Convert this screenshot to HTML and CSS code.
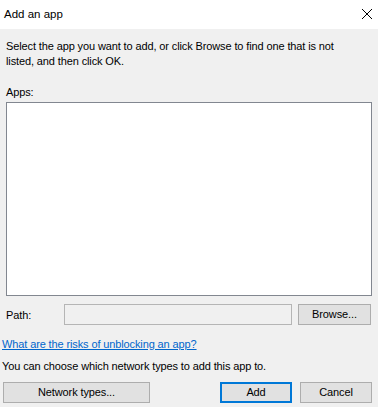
FILE: index.html
```html
<!DOCTYPE html>
<html>
<head>
<meta charset="utf-8">
<link rel="stylesheet" href="styles.css">
</head>
<body>
<div class="dialog">
  <div class="titlebar">
    <span class="title">Add an app</span>
    <svg class="close" width="12" height="12" viewBox="0 0 12 12"><path d="M1 1 L11 11 M11 1 L1 11" stroke="#000" stroke-width="1" fill="none"/></svg>
  </div>
  <div class="content">
    <p class="intro">Select the app you want to add, or click Browse to find one that is not listed, and then click OK.</p>
    <div class="label apps-label">Apps:</div>
    <div class="listbox"></div>
    <div class="path-row">
      <span class="label path-label">Path:</span>
      <div class="pathbox"></div>
      <button class="btn browse">Browse...</button>
    </div>
    <a class="link" href="#">What are the risks of unblocking an app?</a>
    <p class="note">You can choose which network types to add this app to.</p>
    <div class="button-row">
      <button class="btn network">Network types...</button>
      <div class="spacer"></div>
      <button class="btn add default">Add</button>
      <button class="btn cancel">Cancel</button>
    </div>
  </div>
</div>
</body>
</html>
```
FILE: styles.css
```css
html, body {
  margin: 0;
  padding: 0;
  background: #f0f0f0;
}
body {
  width: 378px;
  height: 407px;
  overflow: hidden;
  font-family: "Liberation Sans", Arial, sans-serif;
  font-size: 11px;
  letter-spacing: -0.12px;
  color: #000;
}
.dialog {
  display: flex;
  flex-direction: column;
  height: 407px;
}
.titlebar {
  height: 29px;
  background: #fff;
  display: flex;
  align-items: center;
  justify-content: space-between;
  padding: 0 5px 0 4px;
}
.title {
  font-size: 11.5px;
  letter-spacing: 0;
  margin-top: -1px;
}
.close {
  display: block;
  margin-top: -2px;
}
.content {
  flex: 1;
  display: flex;
  flex-direction: column;
  padding: 0 6px 0 2px;
}
.intro {
  margin: 10px 0 0 4px;
  max-width: 338px;
  line-height: 15px;
}
.apps-label {
  margin: 16px 0 0 4px;
  line-height: 15px;
}
.listbox {
  margin: 2px 0 0 4px;
  height: 192px;
  background: #fff;
  border: 1px solid #828790;
}
.path-row {
  display: flex;
  align-items: center;
  margin: 8px 0 0 4px;
  height: 21px;
}
.path-label {
  width: 58px;
}
.pathbox {
  width: 226px;
  height: 19px;
  border: 1px solid #b5b5b5;
  background: #f0f0f0;
}
.btn {
  font-family: inherit;
  font-size: 11px;
  letter-spacing: -0.12px;
  color: #000;
  background: #e1e1e1;
  border: 1px solid #adadad;
  padding: 0;
  height: 21px;
  line-height: 19px;
}
.browse {
  margin-left: 6px;
  width: 73px;
}
.link {
  margin-top: 12px;
  color: #0066cc;
  line-height: 15px;
  text-decoration: underline;
  align-self: flex-start;
}
.note {
  margin: 7px 0 0 0;
  line-height: 15px;
}
.button-row {
  display: flex;
  margin-top: 8px;
}
.network {
  margin-left: 1px;
  width: 147px;
}
.spacer {
  flex: 1;
}
.add {
  width: 72px;
}
.default {
  border: 2px solid #0078d7;
  line-height: 17px;
}
.cancel {
  margin-left: 8px;
  width: 72px;
}
```
